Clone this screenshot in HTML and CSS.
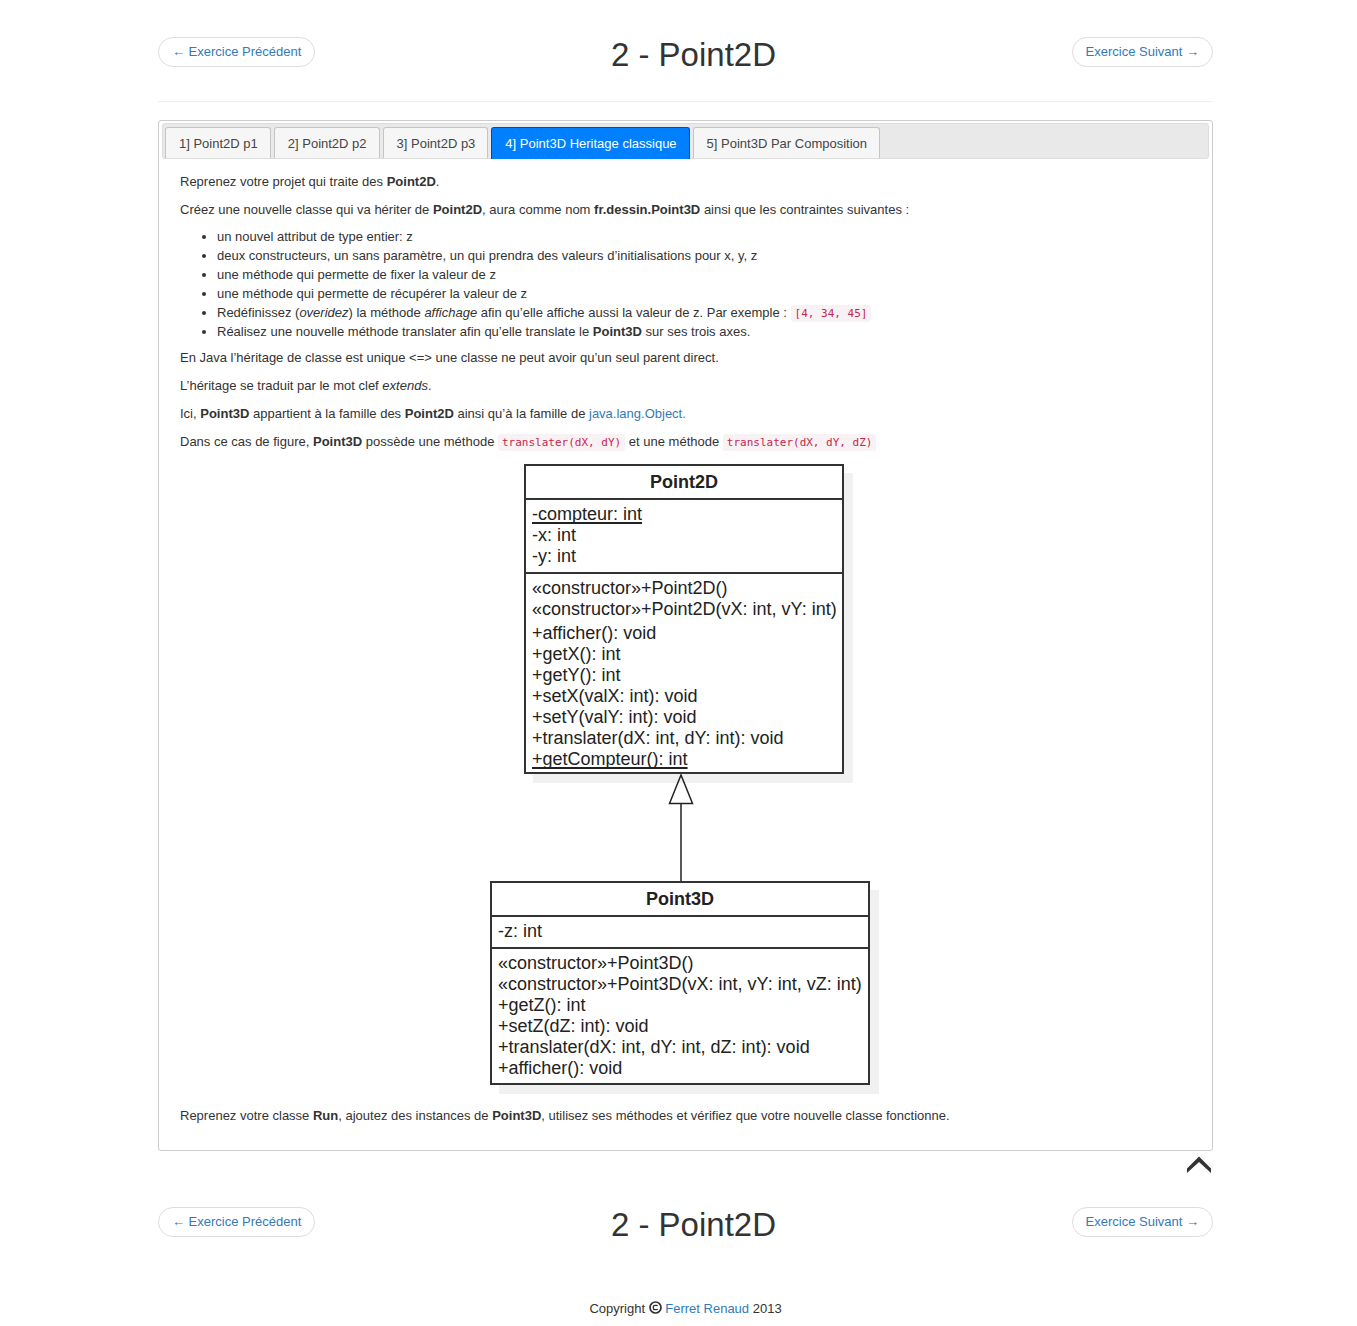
FILE: index.html
```html
<!DOCTYPE html>
<html lang="fr">
<head>
<meta charset="utf-8">
<title>2 - Point2D</title>
<link rel="stylesheet" href="styles.css">
</head>
<body>
<div class="container">
  <header class="pager">
    <a class="pill" href="#precedent">← Exercice Précédent</a>
    <h1>2 - Point2D</h1>
    <a class="pill" href="#suivant">Exercice Suivant →</a>
  </header>
  <hr class="rule">

  <main class="panel">
    <div class="tabs" role="tablist">
      <button class="tab" type="button" role="tab">1] Point2D p1</button>
      <button class="tab" type="button" role="tab">2] Point2D p2</button>
      <button class="tab" type="button" role="tab">3] Point2D p3</button>
      <button class="tab active" type="button" role="tab" aria-selected="true">4] Point3D Heritage classique</button>
      <button class="tab" type="button" role="tab">5] Point3D Par Composition</button>
    </div>
    <div class="content" role="tabpanel">
      <p>Reprenez votre projet qui traite des <b>Point2D</b>.</p>
      <p>Créez une nouvelle classe qui va hériter de <b>Point2D</b>, aura comme nom <b>fr.dessin.Point3D</b> ainsi que les contraintes suivantes :</p>
      <ul>
        <li>un nouvel attribut de type entier: z</li>
        <li>deux constructeurs, un sans paramètre, un qui prendra des valeurs d’initialisations pour x, y, z</li>
        <li>une méthode qui permette de fixer la valeur de z</li>
        <li>une méthode qui permette de récupérer la valeur de z</li>
        <li>Redéfinissez (<i>overidez</i>) la méthode <i>affichage</i> afin qu’elle affiche aussi la valeur de z. Par exemple : <code>[4, 34, 45]</code></li>
        <li>Réalisez une nouvelle méthode translater afin qu’elle translate le <b>Point3D</b> sur ses trois axes.</li>
      </ul>
      <p>En Java l’héritage de classe est unique &lt;=&gt; une classe ne peut avoir qu’un seul parent direct.</p>
      <p>L’héritage se traduit par le mot clef <i>extends</i>.</p>
      <p>Ici, <b>Point3D</b> appartient à la famille des <b>Point2D</b> ainsi qu’à la famille de <a href="#object">java.lang.Object.</a></p>
      <p>Dans ce cas de figure, <b>Point3D</b> possède une méthode <code>translater(dX, dY)</code> et une méthode <code>translater(dX, dY, dZ)</code></p>

      <figure class="uml">
        <section class="class-box parent">
          <h2>Point2D</h2>
          <ul>
            <li class="static">-compteur: int</li>
            <li>-x: int</li>
            <li>-y: int</li>
          </ul>
          <ul>
            <li>«constructor»+Point2D()</li>
            <li>«constructor»+Point2D(vX: int, vY: int)</li>
          </ul>
          <ul class="methods">
            <li>+afficher(): void</li>
            <li>+getX(): int</li>
            <li>+getY(): int</li>
            <li>+setX(valX: int): void</li>
            <li>+setY(valY: int): void</li>
            <li>+translater(dX: int, dY: int): void</li>
            <li class="static">+getCompteur(): int</li>
          </ul>
        </section>
        <svg class="inherits" width="26" height="107" viewBox="0 0 26 107" fill="none" stroke="#222" stroke-width="1.5" aria-hidden="true">
          <path d="M13 1 L1.500 29.500 H24.500 Z M13 29.500 V107"/>
        </svg>
        <section class="class-box child">
          <h2>Point3D</h2>
          <ul>
            <li>-z: int</li>
          </ul>
          <ul>
            <li>«constructor»+Point3D()</li>
            <li>«constructor»+Point3D(vX: int, vY: int, vZ: int)</li>
            <li>+getZ(): int</li>
            <li>+setZ(dZ: int): void</li>
            <li>+translater(dX: int, dY: int, dZ: int): void</li>
            <li>+afficher(): void</li>
          </ul>
        </section>
      </figure>

      <p>Reprenez votre classe <b>Run</b>, ajoutez des instances de <b>Point3D</b>, utilisez ses méthodes et vérifiez que votre nouvelle classe fonctionne.</p>
    </div>
  </main>

  <div class="to-top">
    <a href="#" aria-label="Haut de page">
      <svg width="26" height="18" viewBox="0 0 26 18" aria-hidden="true"><path d="M12 0.500 L24 12.500 V17 L12 6 L0 17 V12.500 Z" fill="#333"/></svg>
    </a>
  </div>

  <nav class="pager">
    <a class="pill" href="#precedent">← Exercice Précédent</a>
    <h1>2 - Point2D</h1>
    <a class="pill" href="#suivant">Exercice Suivant →</a>
  </nav>

  <footer class="copyright">
    Copyright
    <svg width="13" height="13" viewBox="0 0 13 13" fill="none" stroke="#333" aria-hidden="true"><circle cx="6.500" cy="6.500" r="5.500" stroke-width="1.700"/><path d="M8.700 5 Q8.300 4.300 7.300 4.300 H5.900 Q4.300 4.300 4.300 6.500 T5.900 8.700 H7.300 Q8.300 8.700 8.700 8" stroke-width="1.300"/></svg>
    <a href="#auteur">Ferret Renaud</a> 2013
  </footer>
</div>
</body>
</html>
```
FILE: styles.css
```css
* {
  box-sizing: border-box;
}

body {
  margin: 0;
  padding-left: 14px;
  background: #fff;
  color: #333;
  font: 13px/18px "Liberation Sans", Arial, sans-serif;
}

a {
  color: #337ab7;
  text-decoration: none;
}

.container {
  max-width: 1055px;
  margin: 0 auto;
  padding-top: 37px;
}

.pager {
  display: flex;
  justify-content: space-between;
  align-items: flex-start;
}

.pager h1 {
  margin: 0;
  font-size: 33px;
  font-weight: normal;
  line-height: 36px;
}

.pill {
  padding: 5px 13px;
  border: 1px solid #ddd;
  border-radius: 15px;
}

.rule {
  margin: 28px 0 18px;
  border: 0;
  border-top: 1px solid #eee;
}

.panel {
  padding: 2px 3px 15px;
  border: 1px solid #ccc;
  border-radius: 3px;
}

.tabs {
  display: flex;
  gap: 3px;
  padding: 3px 2px 0;
  border: 1px solid #ddd;
  border-radius: 3px;
  background: #e9e9e9;
}

.tab {
  padding: 7px 12px 5px 13px;
  border: 1px solid #c5c5c5;
  border-bottom: 0;
  border-radius: 3px 3px 0 0;
  background: #f6f6f6;
  color: #454545;
  font: inherit;
}

.tab.active {
  margin-bottom: -1px;
  padding-bottom: 6px;
  border-color: #003eff;
  background: #007fff;
  color: #fff;
}

.content {
  padding: 14px 18px 0;
}

.content p {
  margin: 0 0 10px;
}

.content > ul {
  margin: -2px 0 8px;
  padding-left: 37px;
}

.content > ul > li {
  line-height: 19px;
}

code {
  padding: 2px 4px;
  border-radius: 3px;
  background: #f9f2f4;
  color: #c7254e;
  font: 11px/14px "DejaVu Sans Mono", monospace;
}

.content > .uml {
  display: flex;
  flex-direction: column;
  align-items: flex-start;
  width: 391px;
  margin: 13px auto 22px;
  color: #222;
  font-size: 18px;
  line-height: 21px;
}

.class-box {
  border: 2px solid #333;
  background: #fff;
  box-shadow: 9px 9px #f1f1f1;
}

.parent {
  width: 320px;
  margin-left: 34px;
}

.child {
  width: 380px;
}

.class-box h2 {
  margin: 0;
  padding: 6px 0 5px;
  font-size: 18px;
  line-height: 21px;
  text-align: center;
}

.class-box ul {
  margin: 0;
  padding: 4px 6px;
  border-top: 2px solid #333;
  list-style: none;
  white-space: nowrap;
}

.class-box h2 + ul {
  padding-bottom: 5px;
}

.class-box .methods {
  margin-top: -1px;
  padding-top: 0;
  padding-bottom: 2px;
  border-top: 0;
}

.static {
  text-decoration: underline 2px;
  text-underline-offset: 2px;
  text-decoration-skip-ink: none;
}

.inherits {
  display: block;
  margin-left: 178px;
}

.to-top {
  display: flex;
  justify-content: flex-end;
  height: 56px;
  padding-top: 5px;
}

.copyright {
  padding: 57px 0 8px;
  text-align: center;
}

.copyright svg {
  vertical-align: -1px;
}
```
